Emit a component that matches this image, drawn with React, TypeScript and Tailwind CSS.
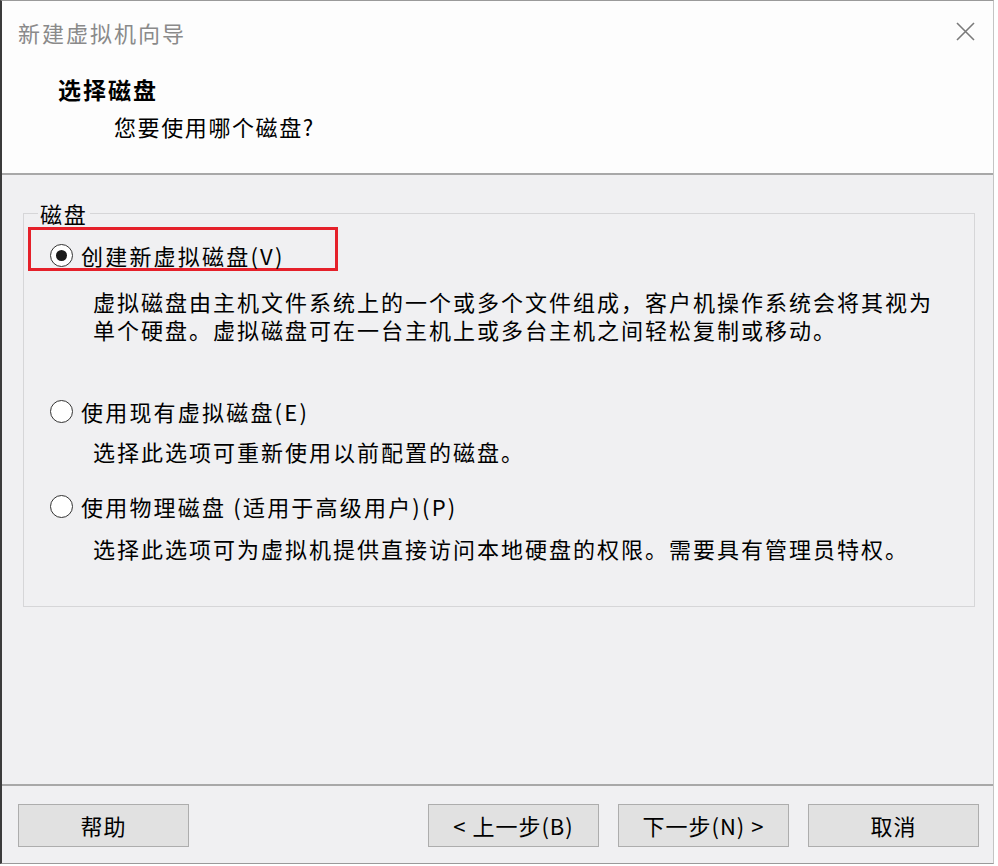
import React from "react";

const font = { fontFamily: '"Noto Sans CJK SC", "Noto Sans", sans-serif' };

type Option = {
  label: string;
  desc: string[];
  checked?: boolean;
};

const options: Option[] = [
  {
    label: "创建新虚拟磁盘(V)",
    desc: [
      "虚拟磁盘由主机文件系统上的一个或多个文件组成，客户机操作系统会将其视为",
      "单个硬盘。虚拟磁盘可在一台主机上或多台主机之间轻松复制或移动。",
    ],
    checked: true,
  },
  { label: "使用现有虚拟磁盘(E)", desc: ["选择此选项可重新使用以前配置的磁盘。"] },
  {
    label: "使用物理磁盘 (适用于高级用户)(P)",
    desc: ["选择此选项可为虚拟机提供直接访问本地硬盘的权限。需要具有管理员特权。"],
  },
];

const Radio = ({ checked }: { checked?: boolean }) => (
  <span className="flex h-[23px] w-[23px] shrink-0 items-center justify-center rounded-full border-[1.5px] border-[#333] bg-white">
    {checked && <span className="h-[11px] w-[11px] rounded-full bg-[#1a1a1a]" />}
  </span>
);

const RadioRow = ({ label, checked }: { label: string; checked?: boolean }) => (
  <div className="flex items-center gap-[8px]">
    <Radio checked={checked} />
    <span className="leading-[24px] tracking-[2.2px]">{label}</span>
  </div>
);

const Desc = ({ lines }: { lines: string[] }) => (
  <div className="pl-[69px] leading-[28px] tracking-[2px]">
    {lines.map((l) => (
      <div key={l}>{l}</div>
    ))}
  </div>
);

const WizardButton = ({ children }: { children: React.ReactNode }) => (
  <button className="h-[43px] w-[171px] border border-[#adadad] bg-[#e1e1e1] text-[22px] tracking-[1px] text-black">
    {children}
  </button>
);

const App = () => {
  const [first, second, third] = options;
  return (
    <div className="h-[866px] w-[998px] bg-white text-[22px] text-black" style={font}>
      <div className="flex h-[864px] w-[994px] flex-col border-t border-r border-b border-l-2 border-t-[#9a9a9a] border-r-[#c4c4c4] border-b-[#9a9a9a] border-l-[#3b3b3b]">
        <div className="flex h-[172px] shrink-0 flex-col bg-[#fdfdfd]">
          <div className="flex h-[62px] items-center justify-between pl-[16px] pr-[18px]">
            <span className="tracking-[2px] text-[#8a8a8a]">新建虚拟机向导</span>
            <svg width="19" height="19" viewBox="0 0 19 19" className="mt-[-2px]">
              <path d="M1 1 L18 18 M18 1 L1 18" stroke="#7a7a7a" strokeWidth="1.6" fill="none" />
            </svg>
          </div>
          <div className="mt-[11px] pl-[56px] text-[23px] font-bold leading-[30px] tracking-[2px]">选择磁盘</div>
          <div className="mt-[7px] pl-[112px] leading-[30px] tracking-[1.6px]">您要使用哪个磁盘?</div>
        </div>
        <div className="h-[2px] shrink-0 bg-[#a8a8a8]" />
        <div className="flex-1 bg-[#f0f0f2] pt-[26px]">
          <fieldset className="ml-[21px] w-[952px] border border-[#d6d6d8] pb-[44px]">
            <legend className="ml-[14px] px-[2px] leading-[24px] tracking-[1.8px]">磁盘</legend>
            <div className="ml-[4px] mt-[2px] h-[44px] w-[310px] border-[3px] border-[#e5202a] pl-[19px] pt-[13px]">
              <RadioRow label={first.label} checked />
            </div>
            <div className="mt-[16px]">
              <Desc lines={first.desc} />
            </div>
            <div className="mt-[56px] pl-[26px]">
              <RadioRow label={second.label} />
            </div>
            <div className="mt-[14px]">
              <Desc lines={second.desc} />
            </div>
            <div className="mt-[29px] pl-[26px]">
              <RadioRow label={third.label} />
            </div>
            <div className="mt-[16px]">
              <Desc lines={third.desc} />
            </div>
          </fieldset>
        </div>
        <div className="h-[2px] shrink-0 bg-[#a8a8a8]" />
        <div className="flex h-[77px] shrink-0 items-start justify-between bg-[#f0f0f2] pl-[16px] pr-[14px] pt-[18px]">
          <WizardButton>帮助</WizardButton>
          <div className="flex gap-[19px]">
            <WizardButton>&lt; 上一步(B)</WizardButton>
            <WizardButton>下一步(N) &gt;</WizardButton>
            <WizardButton>取消</WizardButton>
          </div>
        </div>
      </div>
    </div>
  );
};

export default App;
